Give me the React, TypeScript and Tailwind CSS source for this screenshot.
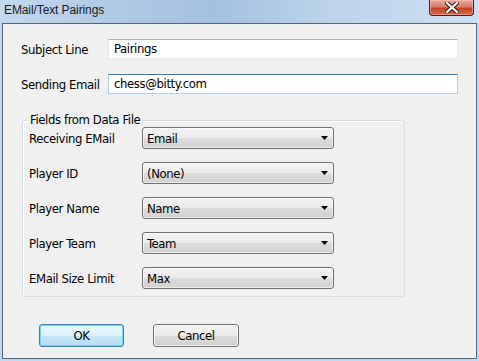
import React from "react";

const F = "font-['DejaVu_Sans_Condensed','Liberation_Sans',Arial,sans-serif] text-[13px] tracking-[-0.4px] text-black";

function Select({ value }: { value: string }) {
  return (
    <div className="w-[192px] h-[22px] rounded-[3px] border border-[#707070] bg-[linear-gradient(to_bottom,#f3f3f3_0%,#ebebeb_50%,#dddddd_51%,#d1d1d1_100%)] shadow-[inset_0_0_0_1px_rgba(255,255,255,0.6)] flex items-center pl-[4px] pr-[5px]">
      <span className="flex-1 leading-none">{value}</span>
      <svg width="7" height="4" viewBox="0 0 7 4">
        <path d="M0 0 H7 L3.5 4 Z" fill="#000" />
      </svg>
    </div>
  );
}

function Row({ label, value }: { label: string; value: string }) {
  return (
    <div className="flex items-center h-[22px]">
      <div className="w-[113px] pt-[1px]">{label}</div>
      <Select value={value} />
    </div>
  );
}

export default function App() {
  return (
    <div className={`w-[479px] h-[361px] flex flex-col overflow-hidden bg-[#c3d9ef] ${F}`}>
      {/* title bar */}
      <div className="h-[23px] flex items-start bg-[linear-gradient(90deg,#c4d9ee_0%,#b2cbe6_20%,#a3c1e2_45%,#bdd4ec_70%,#cddff2_100%)]">
        <span className="ml-[4px] mt-[3px] font-['Liberation_Sans',Arial,sans-serif] text-[12px] tracking-[-0.1px] text-[#1a1a1a] leading-[15px]">
          EMail/Text Pairings
        </span>
        <div className="ml-auto mr-[5px] w-[45px] h-[16px] rounded-b-[4px] border border-t-0 border-[#5c1a12] bg-[linear-gradient(to_bottom,#e9a99b_0%,#d47e69_45%,#c2432a_55%,#cf6a48_100%)] shadow-[inset_0_0_0_1px_rgba(255,200,190,0.5)] flex items-center justify-center">
          <svg width="14" height="11" viewBox="0 0 14 11">
            <path d="M2 1 L12 10 M12 1 L2 10" stroke="#3a1a14" strokeWidth="4.2" strokeLinecap="square" />
            <path d="M2 1 L12 10 M12 1 L2 10" stroke="#ffffff" strokeWidth="2.2" strokeLinecap="square" />
          </svg>
        </div>
      </div>
      {/* client */}
      <div className="mx-[2px] h-[336px] border border-[#52667e] bg-[#f0f0f0] flex flex-col">
        <div className="flex items-center h-[20px] mt-[15px] pl-[18px]">
          <div className="w-[87px] pt-[2px]">Subject Line</div>
          <div className="w-[350px] h-[20px] border border-[#e3e9ef] border-t-[#abadb3] bg-white pl-[5px] flex items-center">
            Pairings
          </div>
        </div>
        <div className="flex items-center h-[20px] mt-[15px] pl-[18px]">
          <div className="w-[87px] pt-[2px]">Sending Email</div>
          <div className="w-[350px] h-[20px] border border-[#b5cfe7] border-t-[#3d7bad] bg-white pl-[5px] flex items-center">
            chess@bitty.com
          </div>
        </div>
        <div className="relative ml-[19px] mt-[26px] w-[383px] h-[177px] rounded-[3px] border border-[#d5dfe5] shadow-[inset_1px_1px_0_#ffffff] pl-[6px] pt-[6px] flex flex-col gap-[13px]">
          <span className="absolute top-[-9px] left-[5px] px-[2px] bg-[#f0f0f0] leading-[16px]">
            Fields from Data File
          </span>
          <Row label="Receiving EMail" value="Email" />
          <Row label="Player ID" value="(None)" />
          <Row label="Player Name" value="Name" />
          <Row label="Player Team" value="Team" />
          <Row label="EMail Size Limit" value="Max" />
        </div>
        <div className="flex mt-[27px] pl-[36px] gap-[29px]">
          <div className="w-[85px] h-[23px] rounded-[3px] border border-[#3c7fb1] bg-[linear-gradient(to_bottom,#ecf7fd_0%,#dcf1fc_50%,#c6e7f9_51%,#b4dcf3_100%)] shadow-[inset_0_0_0_1px_#78d0f5] flex items-center justify-center">
            OK
          </div>
          <div className="w-[86px] h-[23px] rounded-[3px] border border-[#707070] bg-[linear-gradient(to_bottom,#f3f3f3_0%,#ebebeb_50%,#dddddd_51%,#d1d1d1_100%)] shadow-[inset_0_0_0_1px_rgba(255,255,255,0.7)] flex items-center justify-center">
            Cancel
          </div>
        </div>
      </div>
    </div>
  );
}
